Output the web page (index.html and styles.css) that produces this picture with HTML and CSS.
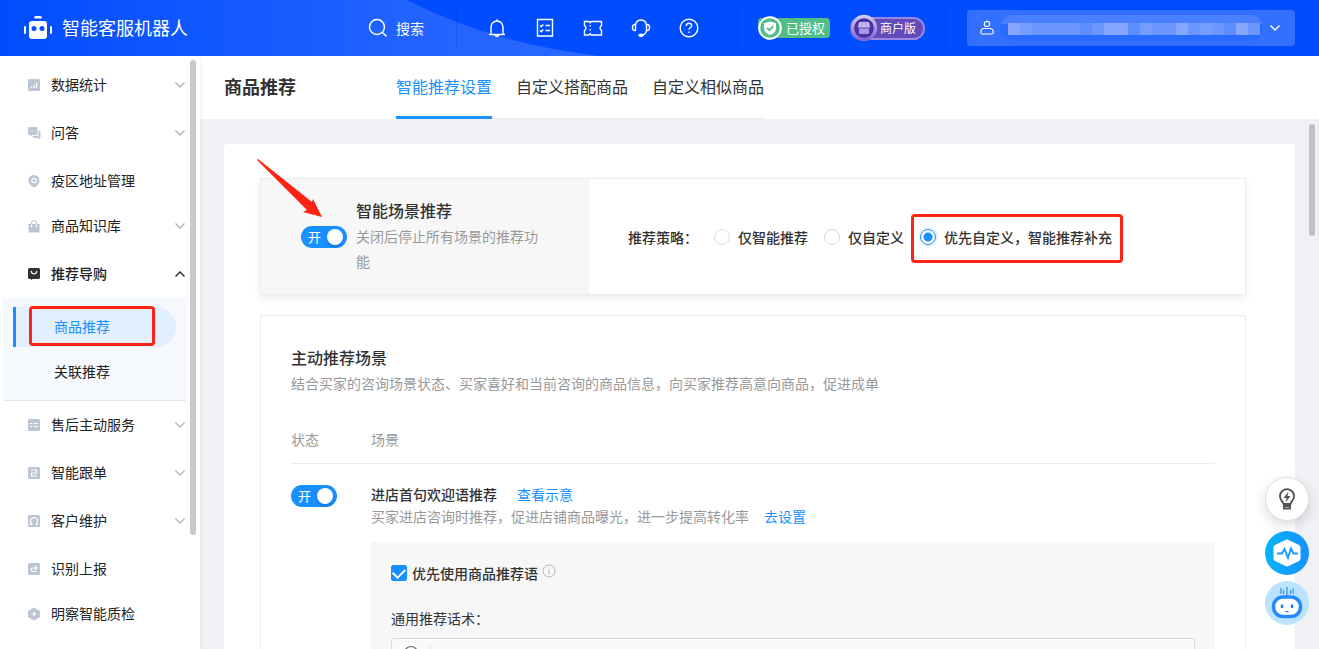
FILE: index.html
```
<!DOCTYPE html>
<html lang="zh-CN">
<head>
<meta charset="utf-8">
<meta name="viewport" content="width=device-width, initial-scale=1">
<title>智能客服机器人</title>
<link rel="stylesheet" href="styles.css">
</head>
<body>
<svg class="defs" aria-hidden="true">
  <symbol id="chevron" viewBox="0 0 12 12"><path d="M1.500 3.500l4.500 4.500l4.500-4.500" fill="none" stroke="currentColor" stroke-width="1.400"/></symbol>
</svg>
<header class="topbar">
  <svg class="topbar-wave" viewBox="0 0 600 56" preserveAspectRatio="none" aria-hidden="true">
    <defs><linearGradient id="wave" x1="0" x2="1"><stop offset="0" stop-color="#004dff"/><stop offset=".72" stop-color="#2463ff"/><stop offset="1" stop-color="#2a68ff"/></linearGradient></defs>
    <path d="M0 0H407Q490 43 600 56H0Z" fill="url(#wave)"/>
  </svg>
  <a class="brand" href="#">
    <svg width="28" height="24" viewBox="0 0 28 24" aria-hidden="true"><path fill="#fff" fill-rule="evenodd" d="M10 1.500Q10 0 12 0h4q2 0 2 1.500T16 2.500h-4Q10 2.500 10 1.500ZM8 5h12q3 0 3 3v12q0 3-3 3H8q-3 0-3-3V8q0-3 3-3ZM10 10a2.500 2.500 0 1 0 0 5a2.500 2.500 0 0 0 0-5ZM18 10a2.500 2.500 0 1 0 0 5a2.500 2.500 0 0 0 0-5ZM0 11q0-1 1-1t1 1v6q0 1-1 1t-1-1ZM26 11q0-1 1-1t1 1v6q0 1-1 1t-1-1Z"/></svg>
    <span>智能客服机器人</span>
  </a>
  <button class="search" type="button">
    <svg width="20" height="20" viewBox="0 0 20 20" fill="none" stroke="#fff" stroke-width="1.400" aria-hidden="true"><circle cx="9" cy="9" r="7.500"/><path d="M14.500 14.500l4 4"/></svg>
    <span>搜索</span>
  </button>
  <nav class="tools" aria-label="工具">
    <button type="button" aria-label="通知"><svg viewBox="0 0 20 20"><path d="M2 16.500h16M4 16.500V9a6 6 0 0 1 12 0v7.500M8 17q2 3 4 0M10 1.200V3"/></svg></button>
    <button type="button" aria-label="任务"><svg viewBox="0 0 20 20"><path d="M2.500 1.500h15v16.500h-15ZM5 7.500l1.200 1.200L8.300 6.600M10.500 7.500h4.500M5 12.500l1.200 1.200L8.300 11.600M10.500 12.500h4.500"/></svg></button>
    <button type="button" aria-label="工单"><svg viewBox="0 0 20 20"><path d="M1.500 3.500h4.500l1.200 1.200l1.200-1.200H18.500v4q-3 2.500 0 5V17H8.400l-1.200-1.200L6 17H1.500v-4.500q3-2.500 0-5ZM7.200 7v1.500M7.200 11v1.500"/></svg></button>
    <button type="button" aria-label="客服"><svg viewBox="0 0 20 20"><path d="M4.500 7.500Q5 2 10 2t5.500 5.500v5Q15 16 12 17M4.500 6.500v6Q1.500 13 1.500 9.500t3-3M15.500 6.500v6q3 .5 3-3t-3-3"/><ellipse cx="10" cy="17.200" rx="2" ry="1" fill="#fff"/></svg></button>
    <button type="button" aria-label="帮助"><svg viewBox="0 0 20 20"><circle cx="10" cy="10" r="8.800"/><path d="M7.300 8q0-2.800 2.700-2.800T12.700 7.700Q12.700 9 11 10q-1 .7-1 1.800M10 13.500v1.500"/></svg></button>
  </nav>
  <div class="badges">
    <span class="badge badge-green">
      <svg width="24" height="24" viewBox="0 0 24 24" aria-hidden="true"><circle cx="12" cy="12" r="10.800" fill="#51bd87" stroke="#fff" stroke-width="2"/><path d="M12 5.500l6 1.800v5.200q0 4-6 6.500q-6-2.500-6-6.500V7.300Z" fill="#fff"/><path d="M9 11.800l2.400 2.400l4-4" fill="none" stroke="#51bd87" stroke-width="1.800"/></svg>
      <span>已授权</span>
    </span>
    <span class="badge badge-purple">
      <svg width="28" height="28" viewBox="0 0 28 28" aria-hidden="true"><defs><radialGradient id="orb"><stop offset="0" stop-color="#6954c0"/><stop offset="1" stop-color="#382593"/></radialGradient><linearGradient id="ring" x2="0" y2="1"><stop stop-color="#d0c6f7"/><stop offset="1" stop-color="#8064d6"/></linearGradient></defs><circle cx="14" cy="14" r="11.500" fill="url(#orb)" stroke="url(#ring)" stroke-width="3.500"/><path d="M9 8h10l1 5.500H8Z" fill="#c9b8f5"/><path d="M9 14.500h10V19q0 1-1 1h-8q-1 0-1-1Z" fill="#aa96e5"/><path d="M12 8v5.500M16 8v5.500" stroke="#9d8adb" stroke-width=".8"/></svg>
      <span>商户版</span>
    </span>
  </div>
  <button class="account" type="button" aria-label="账户">
    <svg width="14" height="16" viewBox="0 0 14 16" fill="none" stroke="#fff" stroke-width="1.200" aria-hidden="true"><circle cx="7" cy="4" r="2.700"/><path d="M.8 12.500Q.8 8.500 4 8.500h6q3.200 0 3.200 4q0 1.500-1.500 1.500H2.300Q.8 14 .8 12.500Z"/></svg>
    <span class="masked"><span class="masked-strip"><i></i><i></i><i></i><i></i><i></i><i></i><i></i><i></i><i></i><i></i><i></i><i></i><i></i><i></i><i></i><i></i><i></i><i></i><i></i><i></i><i></i></span></span>
    <svg width="12" height="12" aria-hidden="true"><use href="#chevron"/></svg>
  </button>
</header>

<div class="shell">
  <aside class="sidebar">
    <nav aria-label="主菜单">
      <button class="item" type="button"><svg class="glyph" viewBox="0 0 12 12"><rect width="12" height="12" rx="1.500"/><path class="cut" d="M3.500 9V7.500M6 9V5.500M8.500 9V3.500"/></svg><span>数据统计</span><svg class="chev"><use href="#chevron"/></svg></button>
      <button class="item" type="button"><svg class="glyph" viewBox="0 0 12 12"><path d="M0 1.500Q0 0 1.500 0h6.500Q9.500 0 9.500 1.500v5Q9.500 8 8 8H4L2 9.500V8Q0 8 0 6.500ZM10.500 3.500Q12.500 3.500 12.500 5v5q0 1-1 1v1.200L9.500 11H6Q4.500 11 4.500 9H9q1.500 0 1.500-1.500Z"/><path class="cut" d="M2.200 4h1M4.300 4h1M6.400 4h1"/></svg><span>问答</span><svg class="chev"><use href="#chevron"/></svg></button>
      <a class="item item-link" href="#"><svg class="glyph" viewBox="0 0 12 12"><path d="M6 0a5.500 5.500 0 0 1 5.500 5.500Q11.500 9.500 6 12.500Q.5 9.500.5 5.500A5.500 5.500 0 0 1 6 0Z"/><circle class="cut" cx="6" cy="5.500" r="2.200"/></svg><span>疫区地址管理</span></a>
      <button class="item" type="button"><svg class="glyph" viewBox="0 0 12 12"><path d="M.5 4h11v7.500q0 1-1 1h-9q-1 0-1-1Z"/><path d="M3.500 5V3Q3.500.500 6 .500T8.500 3v2" fill="none" stroke="#bcc5d3"/><path class="cut" d="M3.500 4.500v2.500M8.500 4.500v2.500"/></svg><span>商品知识库</span><svg class="chev"><use href="#chevron"/></svg></button>
      <button class="item item-open" type="button" aria-expanded="true"><svg class="glyph" viewBox="0 0 12 12"><path d="M1.500 0h9q1.500 0 1.500 1.500v8Q12 11 10.500 11H4.500L3 12.200V11H1.500Q0 11 0 9.500v-8Q0 0 1.500 0Z"/><path class="cut" d="M3.200 3Q3.500 6 6 6T8.800 3"/></svg><span>推荐导购</span><svg class="chev"><use href="#chevron"/></svg></button>
      <div class="submenu">
        <a class="sub sub-active" href="#" aria-current="page">商品推荐<span class="mark mark-menu"></span></a>
        <a class="sub" href="#">关联推荐</a>
      </div>
      <button class="item" type="button"><svg class="glyph" viewBox="0 0 12 12"><rect width="12" height="12" rx="1.500"/><path class="cut" d="M2 4.500h2.500M6 4.500h4M2 7.500h2.500M6 7.500h4"/></svg><span>售后主动服务</span><svg class="chev"><use href="#chevron"/></svg></button>
      <button class="item" type="button"><svg class="glyph" viewBox="0 0 12 12"><rect width="12" height="12" rx="1.500"/><path class="cut" d="M3 3h5.500v3H3.500v3H9"/></svg><span>智能跟单</span><svg class="chev"><use href="#chevron"/></svg></button>
      <button class="item" type="button"><svg class="glyph" viewBox="0 0 12 12"><rect width="12" height="12" rx="1.500"/><path class="cut" d="M4.500 9.200a3.500 3.500 0 1 1 3 0M2 9.500h2M8 9.500h2"/></svg><span>客户维护</span><svg class="chev"><use href="#chevron"/></svg></button>
      <a class="item item-link" href="#"><svg class="glyph" viewBox="0 0 12 12"><rect width="12" height="12" rx="1.500"/><path class="cut" d="M8.500 5H4.500Q3 5 3 6.500T4.500 8.500H8M7 3l2 2L7 7"/></svg><span>识别上报</span></a>
      <a class="item item-link" href="#"><svg class="glyph" viewBox="0 0 12 12"><path d="M6-.5l6 3.500v6L6 12.500L0 9V3Z"/><path class="cut" d="M6 3.800v4.400M3.800 6h4.400"/></svg><span>明察智能质检</span></a>
    </nav>
    <span class="thumb thumb-side"></span>
  </aside>

  <div class="workspace">
    <div class="pagehead">
      <h1>商品推荐</h1>
      <nav class="tabs" aria-label="推荐设置">
        <a class="tab tab-active" href="#" aria-current="page">智能推荐设置</a>
        <a class="tab" href="#">自定义搭配商品</a>
        <a class="tab" href="#">自定义相似商品</a>
      </nav>
    </div>
    <main class="scroller">
      <div class="sheet">
        <section class="strategy">
          <div class="strategy-main">
            <button class="switch" type="button" role="switch" aria-checked="true" aria-labelledby="scene-title">开</button>
            <div class="strategy-text">
              <h2 id="scene-title">智能场景推荐</h2>
              <p>关闭后停止所有场景的推荐功能</p>
            </div>
            <svg class="arrow" width="66" height="60" viewBox="0 0 66 60" aria-hidden="true"><path d="M1 0L55 43L56 40L65 58L46 53L50 51L0 1Z" fill="#ff2314"/></svg>
          </div>
          <div class="strategy-options" role="radiogroup" aria-labelledby="strategy-label">
            <span id="strategy-label" class="options-label">推荐策略：</span>
            <label class="radio"><input type="radio" name="strategy">仅智能推荐</label>
            <label class="radio"><input type="radio" name="strategy">仅自定义</label>
            <label class="radio"><input type="radio" name="strategy" checked>优先自定义，智能推荐补充<span class="mark mark-radio"></span></label>
          </div>
        </section>

        <section class="scenes">
          <h2>主动推荐场景</h2>
          <p class="muted">结合买家的咨询场景状态、买家喜好和当前咨询的商品信息，向买家推荐高意向商品，促进成单</p>
          <table class="scene-table">
            <thead><tr><th class="col-state" scope="col">状态</th><th scope="col">场景</th></tr></thead>
            <tbody>
              <tr>
                <td class="cell-switch"><button class="switch" type="button" role="switch" aria-checked="true" aria-labelledby="welcome-title">开</button></td>
                <td>
                  <div class="scene-line"><strong id="welcome-title">进店首句欢迎语推荐</strong><a class="link link-wide" href="#">查看示意</a></div>
                  <div class="scene-line muted"><span>买家进店咨询时推荐，促进店铺商品曝光，进一步提高转化率</span><a class="link" href="#">去设置</a></div>
                  <div class="panel">
                    <div class="check-row">
                      <label class="check"><input type="checkbox" checked>优先使用商品推荐语</label>
                      <svg class="info" width="14" height="14" viewBox="0 0 14 14" fill="none" stroke="#b5b5b5" aria-hidden="true"><circle cx="7" cy="7" r="6"/><path d="M7 6v4.500M7 3.500v1.200"/></svg>
                    </div>
                    <label class="field-label" for="script-text">通用推荐话术：</label>
                    <div class="editor">
                      <div class="editor-bar">
                        <svg width="16" height="16" viewBox="0 0 16 16" fill="none" stroke="#666" stroke-width="1.200" aria-hidden="true"><circle cx="8" cy="8" r="6.500"/><path d="M5 9.500q3 3 6 0M5.500 5.500v1M10.500 5.500v1"/></svg>
                      </div>
                      <textarea id="script-text" rows="3"></textarea>
                    </div>
                  </div>
                </td>
              </tr>
            </tbody>
          </table>
        </section>
      </div>
    </main>
    <span class="thumb thumb-main"></span>
  </div>
</div>

<div class="floaters">
  <button class="float float-tip" type="button" aria-label="建议"><svg width="20" height="24" viewBox="0 0 20 24"><path d="M6.500 17Q6 15 4.500 13.500a7 7 0 1 1 11 0Q14 15 13.500 17ZM7 18v3.500h6V18M7 19h6" fill="none" stroke="#555" stroke-width="1.900"/><path d="M11.500 4.500L6.500 11h3l-1 4.500l5-6.500h-3Z" fill="#555"/></svg></button>
  <button class="float float-pulse" type="button" aria-label="诊断"><svg width="30" height="30" viewBox="0 0 30 30"><path d="M13.500 2q1.500-.8 3 0L27 7q1.500.8 1.500 2.500v11q0 1.700-1.500 2.500L16.500 28q-1.500.8-3 0L3 23q-1.500-.8-1.500-2.500v-11Q1.500 7.800 3 7Z" fill="#fff"/><path d="M5 15.500h5l2.500-4.500l3.500 9l3-9.500l2.500 5H26" fill="none" stroke="#129cff" stroke-width="1.900"/></svg></button>
  <button class="float float-bot" type="button" aria-label="机器人助手"><svg width="32" height="34" viewBox="0 0 32 34"><path d="M16 1v9M12.500 4v4M19.500 4v4M10 2v6M22 2v6" stroke="#348fe9" stroke-width="1.200"/><rect x="2.500" y="11" width="27" height="19.500" rx="9.500" fill="#fff" stroke="#258aff" stroke-width="3.500"/><path d="M11 18.500v3.500M21 18.500v3.500" stroke="#1683f5" stroke-width="2.400"/><path d="M14 25h4q-2 3-4 0Z" fill="#1683f5"/></svg></button>
</div>
</body>
</html>
```

FILE: styles.css
```
* { box-sizing: border-box; }
body {
  margin: 0;
  height: 100vh;
  display: flex;
  flex-direction: column;
  overflow: hidden;
  font: 14px/22px "Noto Sans CJK SC", sans-serif;
  color: #333;
  background: #f0f1f5;
}
button { font: inherit; color: inherit; border: 0; background: none; padding: 0; cursor: pointer; }
a { color: inherit; text-decoration: none; }
h1, h2, p { margin: 0; }
.defs { position: absolute; width: 0; height: 0; }

/* top bar */
.topbar {
  position: relative;
  z-index: 3;
  flex: none;
  display: flex;
  align-items: center;
  height: 56px;
  padding: 0 24px;
  background: #004dff;
  color: #fff;
}
.topbar-wave { position: absolute; left: 0; top: 0; width: 600px; height: 56px; }
.topbar > :not(.topbar-wave) { position: relative; }
.brand { display: flex; align-items: center; gap: 10px; font-size: 18px; white-space: nowrap; }
.brand span { padding-bottom: 2px; }
.search { display: flex; align-items: center; gap: 8px; margin-left: auto; padding-right: 32px; }
.tools {
  display: flex;
  align-items: center;
  gap: 28px;
  height: 40px;
  padding: 0 38px 0 30px;
  border: solid rgba(0, 20, 120, .15);
  border-width: 0 1px;
}
.tools button, .tools svg { display: block; width: 20px; height: 20px; }
.tools svg { fill: none; stroke: #fff; stroke-width: 1.400; }
.badges {
  display: flex;
  align-items: center;
  gap: 20px;
  height: 40px;
  padding: 0 20px;
  border-right: 1px solid rgba(0, 20, 120, .15);
}
.badge { display: flex; align-items: center; font-size: 13px; line-height: 20px; white-space: nowrap; }
.badge-green { gap: 4px; height: 20px; padding-right: 5px; border-radius: 4px 4px 4px 12px; background: #51bd87; }
.badge-purple { gap: 2px; height: 23px; padding-right: 7px; border-radius: 12px; background: #604bb7; border: 2px solid #9a86e6; border-left: 0; font-size: 12px; }
.account {
  display: flex;
  align-items: center;
  flex: 0 0 328px;
  gap: 6px;
  height: 36px;
  margin-left: 21px;
  padding: 0 14px 0 13px;
  border-radius: 4px;
  background: #3370ff;
}
.masked {
  flex: 1;
  height: 26px;
  padding: 8px 3px 6px 8px;
  border-radius: 13px;
  background: linear-gradient(#4a80ff 36%, #286aff 36%);
}
.masked-strip { display: flex; height: 12px; }
.masked-strip i { flex: 1; background: #6b97ff; }
.masked-strip i:nth-child(8n + 1) { background: #86a6ff; }
.masked-strip i:nth-child(5n + 2) { background: #749dff; }
.masked-strip i:nth-child(4n + 7) { background: #5c8eff; }
.masked-strip i:nth-child(5n + 10) { background: #86a6ff; }

/* side menu */
.shell { flex: 1; min-height: 0; display: flex; }
.sidebar {
  position: relative;
  z-index: 2;
  flex: 0 0 200px;
  padding: 5px 14px 0 3px;
  background: #fff;
  box-shadow: 0 0 6px rgba(0, 0, 0, .08);
}
.item {
  display: flex;
  align-items: center;
  gap: 11px;
  width: 100%;
  height: 48px;
  padding: 0 0 0 25px;
  color: #222;
  text-align: left;
}
.item span { padding-bottom: 2px; }
.item-link { height: 45px; padding-top: 3px; }
.item-open { font-weight: 500; }
.glyph { flex: none; width: 12px; height: 12px; fill: #bcc5d3; overflow: visible; }
.item .cut { fill: none; stroke: #fff; stroke-width: 1.200; }
.item-open .glyph { fill: #333; }
.chev { width: 12px; height: 12px; margin-left: auto; color: #b3b3b3; }
.item-open .chev { color: #222; transform: rotate(180deg); }
.submenu { padding: 9px 10px 14px; background: #f5f9fd; border-bottom: 1px solid #e3ebf2; }
.sub { position: relative; display: block; padding: 9px 0 0 41px; line-height: 30px; color: #222; }
.sub-active {
  padding: 0 0 2px 38px;
  line-height: 38px;
  color: #1890ff;
  background: #e1efff;
  border-left: 3px solid #1890ff;
  border-radius: 0 20px 20px 0;
}
.thumb { position: absolute; width: 6px; border-radius: 3px; background: #c8c8c8; }
.thumb-side { top: 4px; right: 4px; height: 475px; }
.thumb-main { top: 68px; right: 4px; height: 112px; background: #c1c1c4; }

/* red highlight frames */
.mark { position: absolute; border: 3px solid #ff2314; border-radius: 4px; pointer-events: none; }
.mark-menu { inset: -1px 21px 1px 13px; }
.mark-radio { inset: -12px -11px -15px -9px; }

/* page */
.workspace { position: relative; flex: 1; min-width: 0; display: flex; flex-direction: column; }
.pagehead { flex: none; display: flex; gap: 100px; padding: 0 24px; background: #fff; }
.pagehead h1 { font-size: 18px; line-height: 60px; font-weight: 700; }
.tabs { display: flex; gap: 24px; box-shadow: inset 0 -1px #e8eaee; }
.tab { font-size: 16px; line-height: 61px; padding-bottom: 2px; }
.tab-active { color: #1890ff; box-shadow: inset 0 -3px #1890ff; }
.scroller { flex: 1; min-height: 0; overflow: auto; scrollbar-width: none; padding: 25px 24px; }
.sheet { padding: 34px 49px 34px 36px; border-radius: 4px; background: #fff; }

.strategy { display: flex; min-height: 117px; border: 1px solid #ebebeb; box-shadow: 0 4px 8px rgba(0, 0, 0, .07); }
.strategy-main {
  position: relative;
  flex: 0 0 328px;
  display: flex;
  align-items: center;
  gap: 9px;
  padding: 0 48px 0 40px;
  background: #f7f7f7;
}
.strategy h2, .scenes h2 { font-size: 16px; line-height: 24px; font-weight: 500; }
.strategy-text { margin-bottom: 2px; }
.strategy-text h2 { padding-bottom: 2px; }
.strategy-text p { line-height: 25px; color: #999; }
.arrow { position: absolute; left: -4px; top: -20px; }
.strategy-options { display: flex; align-items: center; gap: 16px; padding-left: 39px; font-weight: 500; white-space: nowrap; }
.radio { position: relative; display: flex; align-items: center; gap: 8px; }
.radio input {
  appearance: none;
  width: 16px;
  height: 16px;
  margin: 0;
  border: 1px solid #d9d9d9;
  border-radius: 50%;
  background: #fff;
}
.radio input:checked {
  border-color: #1890ff;
  background: radial-gradient(circle, #1890ff 4px, #fff 5px);
  box-shadow: 0 0 0 2px #e6f4ff;
}
.switch {
  flex: none;
  display: flex;
  align-items: center;
  justify-content: space-between;
  width: 46px;
  height: 22px;
  padding: 0 4px 0 7px;
  border-radius: 11px;
  background: #1890ff;
  color: #fff;
  font-size: 13px;
  line-height: 22px;
}
.switch::after { content: ""; width: 16px; height: 16px; border-radius: 50%; background: #fff; box-shadow: 0 2px 3px rgba(0, 35, 80, .25); }

.scenes { margin-top: 20px; padding: 29px 30px 30px; border: 1px solid #ebebeb; border-radius: 2px; }
.muted { color: #999; }
.scenes > .muted { margin-top: 3px; }
.scene-table { width: 100%; margin-top: 12px; border-collapse: collapse; table-layout: fixed; }
.scene-table th { padding: 22px 0 13px; border-bottom: 1px solid #ebebeb; color: #999; font-weight: 400; text-align: left; }
.col-state { width: 80px; }
.scene-table td { padding: 19px 0 0; vertical-align: top; }
.scene-table .cell-switch { padding-top: 21px; }
.scene-line { display: flex; gap: 15px; }
.scene-line strong { font-weight: 500; }
.link { color: #1890ff; }
.link-wide { margin-left: 5px; }
.panel { margin-top: 15px; padding: 20px; background: #f7f7f7; border-radius: 2px; }
.check-row { display: flex; align-items: center; gap: 4px; }
.info { margin-bottom: 4px; }
.check { display: flex; align-items: center; gap: 5px; font-weight: 500; }
.check input {
  appearance: none;
  display: grid;
  place-items: center;
  width: 16px;
  height: 16px;
  margin: 0;
  border: 1px solid #d9d9d9;
  border-radius: 2px;
  background: #fff;
}
.check input:checked { border-color: #1890ff; background: #1890ff; }
.check input:checked::after {
  content: "";
  width: 6px;
  height: 10px;
  margin-bottom: 3px;
  border: solid #fff;
  border-width: 0 2px 2px 0;
  transform: rotate(45deg);
}
.field-label { display: block; margin-top: 23px; }
.editor { margin-top: 9px; border: 1px solid #d9d9d9; border-radius: 3px; background: #fafafa; }
.editor-bar { display: flex; padding: 6px 11px; }
.editor-bar svg { box-sizing: content-box; padding-right: 11px; border-right: 1px solid #e5e5e5; }
.editor textarea { display: block; width: 100%; border: 0; background: #fff; resize: none; font: inherit; }

/* floating helpers */
.floaters { position: fixed; z-index: 4; right: 10px; bottom: 24px; display: flex; flex-direction: column; }
.float { display: flex; align-items: center; justify-content: center; width: 44px; height: 44px; border-radius: 50%; }
.float-tip { margin-bottom: 10px; background: #fff; border: 1px solid #e0e0e0; box-shadow: 0 4px 12px rgba(0, 0, 0, .15); }
.float-pulse { margin-bottom: 6px; background: linear-gradient(90deg, #06b4f8, #1890ff); }
.float-bot { background: #bae3ff; }
```
